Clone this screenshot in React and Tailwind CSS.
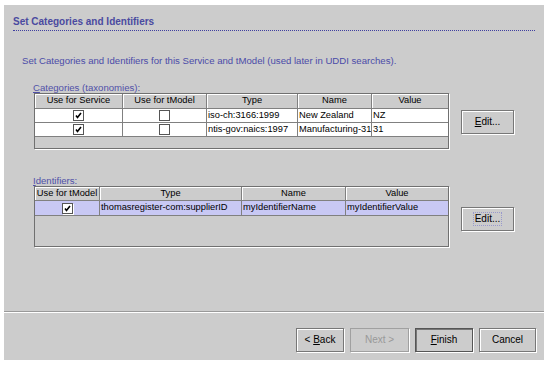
import React from 'react';

const font = { fontFamily: '"Liberation Sans", Arial, sans-serif' };

const Check = ({ checked }) => (
  <span className="inline-flex h-[11px] w-[11px] items-center justify-center border border-[#555] bg-white shadow-[1px_1px_0_#fff]">
    {checked ? (
      <svg width="7" height="7" viewBox="0 0 7 7">
        <path d="M1 3.5 L2.5 5.5 L6 1" stroke="#000" strokeWidth="1.6" fill="none" />
      </svg>
    ) : null}
  </span>
);

const Btn = ({ children, disabled, isDefault, focused, className = '' }) => {
  const base = disabled
    ? 'border-[#a0a0a0] text-[#999] shadow-[1px_1px_0_#fff]'
    : isDefault
    ? 'border-[#555] text-black shadow-[1px_1px_0_#fff,inset_1px_1px_0_#777]'
    : 'border-[#777] text-black shadow-[1px_1px_0_#fff,inset_1px_1px_0_#fff]';
  return (
    <button
      type="button"
      className={`flex h-[24px] items-center justify-center border bg-[#cccccc] text-[10px] ${base} ${className}`}
    >
      <span className={focused ? 'border border-dotted border-[#9999cc] px-[1px] leading-[12px]' : 'leading-[12px]'}>
        {children}
      </span>
    </button>
  );
};

const HeaderCell = ({ w, children }) => (
  <div
    className="flex h-full items-center justify-center overflow-hidden whitespace-nowrap border-r border-b border-[#808080] bg-[#cccccc] shadow-[inset_1px_1px_0_#fff] last:border-r-0"
    style={{ width: w }}
  >
    {children}
  </div>
);

const Cell = ({ w, children, center, selected }) => (
  <div
    className={`flex h-full items-center overflow-hidden whitespace-nowrap border-r border-b border-[#808080] px-[1px] last:border-r-0 ${
      center ? 'justify-center' : ''
    } ${selected ? 'bg-[#c8c8f4]' : 'bg-white'}`}
    style={{ width: w }}
  >
    {children}
  </div>
);

const Table = ({ cols, headers, rows, height, headerH, rowH, selected }) => (
  <div
    className="flex w-[415px] flex-col overflow-hidden border border-[#707070] bg-[#cccccc] text-[9.3px] shadow-[1px_1px_0_#fff]"
    style={{ height }}
  >
    <div className="flex shrink-0" style={{ height: headerH }}>
      {headers.map((h, i) => (
        <HeaderCell key={h} w={cols[i]}>
          {h}
        </HeaderCell>
      ))}
    </div>
    {rows.map((r, ri) => (
      <div key={ri} className="flex shrink-0" style={{ height: rowH }}>
        {r.map((c, ci) => (
          <Cell key={ci} w={cols[ci]} center={typeof c !== 'string'} selected={selected}>
            {c}
          </Cell>
        ))}
      </div>
    ))}
  </div>
);

const U = ({ children }) => <span className="underline underline-offset-1">{children}</span>;

export default function App() {
  return (
    <div className="min-h-[366px] bg-white pl-[4px] pt-[5px] text-[10px] text-black" style={font}>
      <div className="flex h-[355px] w-[540px] flex-col bg-[#cccccc]">
        <div className="mx-[9px] mt-[11px] border-b border-dotted border-[#4040a0] pb-[2px] text-[10px] font-bold leading-[12px] text-[#4a4aa0]">
          Set Categories and Identifiers
        </div>

        <div className="ml-[18px] mt-[24px] text-[9.6px] leading-[12px] text-[#4b4ba8]">
          Set Categories and Identifiers for this Service and tModel (used later in UDDI searches).
        </div>

        <div className="ml-[29px] mt-[15px] text-[9.6px] leading-[11px] text-[#5050a8]">
          <U>C</U>ategories (taxonomies):
        </div>
        <div className="ml-[30px] flex items-start gap-[12px]">
          <Table
            cols={[88, 84, 91, 74, 76]}
            headers={['Use for Service', 'Use for tModel', 'Type', 'Name', 'Value']}
            rows={[
              [<Check checked />, <Check />, 'iso-ch:3166:1999', 'New Zealand', 'NZ'],
              [<Check checked />, <Check />, 'ntis-gov:naics:1997', 'Manufacturing-31', '31'],
            ]}
            height={56}
            headerH={15}
            rowH={14}
          />
          <Btn className="mt-[17px] w-[53px]">
            <U>E</U>dit...
          </Btn>
        </div>

        <div className="ml-[29px] mt-[26px] text-[9.6px] leading-[11px] text-[#5050a8]">
          <U>I</U>dentifiers:
        </div>
        <div className="ml-[30px] flex items-start gap-[12px]">
          <Table
            cols={[65, 142, 104, 102]}
            headers={['Use for tModel', 'Type', 'Name', 'Value']}
            rows={[[<Check checked />, 'thomasregister-com:supplierID', 'myIdentifierName', 'myIdentifierValue']]}
            height={61}
            headerH={14}
            rowH={15}
            selected
          />
          <Btn className="mt-[21px] w-[53px]" focused>
            Edit...
          </Btn>
        </div>

        <div className="flex-1" />
        <div className="h-[2px] border-t border-[#999] bg-white" />
        <div className="flex justify-end gap-[6px] pb-[8px] pr-[8px] pt-[15px]">
          <Btn className="w-[48px]">
            &lt; <U>B</U>ack
          </Btn>
          <Btn className="w-[59px]" disabled>
            Next &gt;
          </Btn>
          <Btn className="w-[58px]" isDefault>
            <U>F</U>inish
          </Btn>
          <Btn className="w-[57px]">Cancel</Btn>
        </div>
      </div>
    </div>
  );
}
